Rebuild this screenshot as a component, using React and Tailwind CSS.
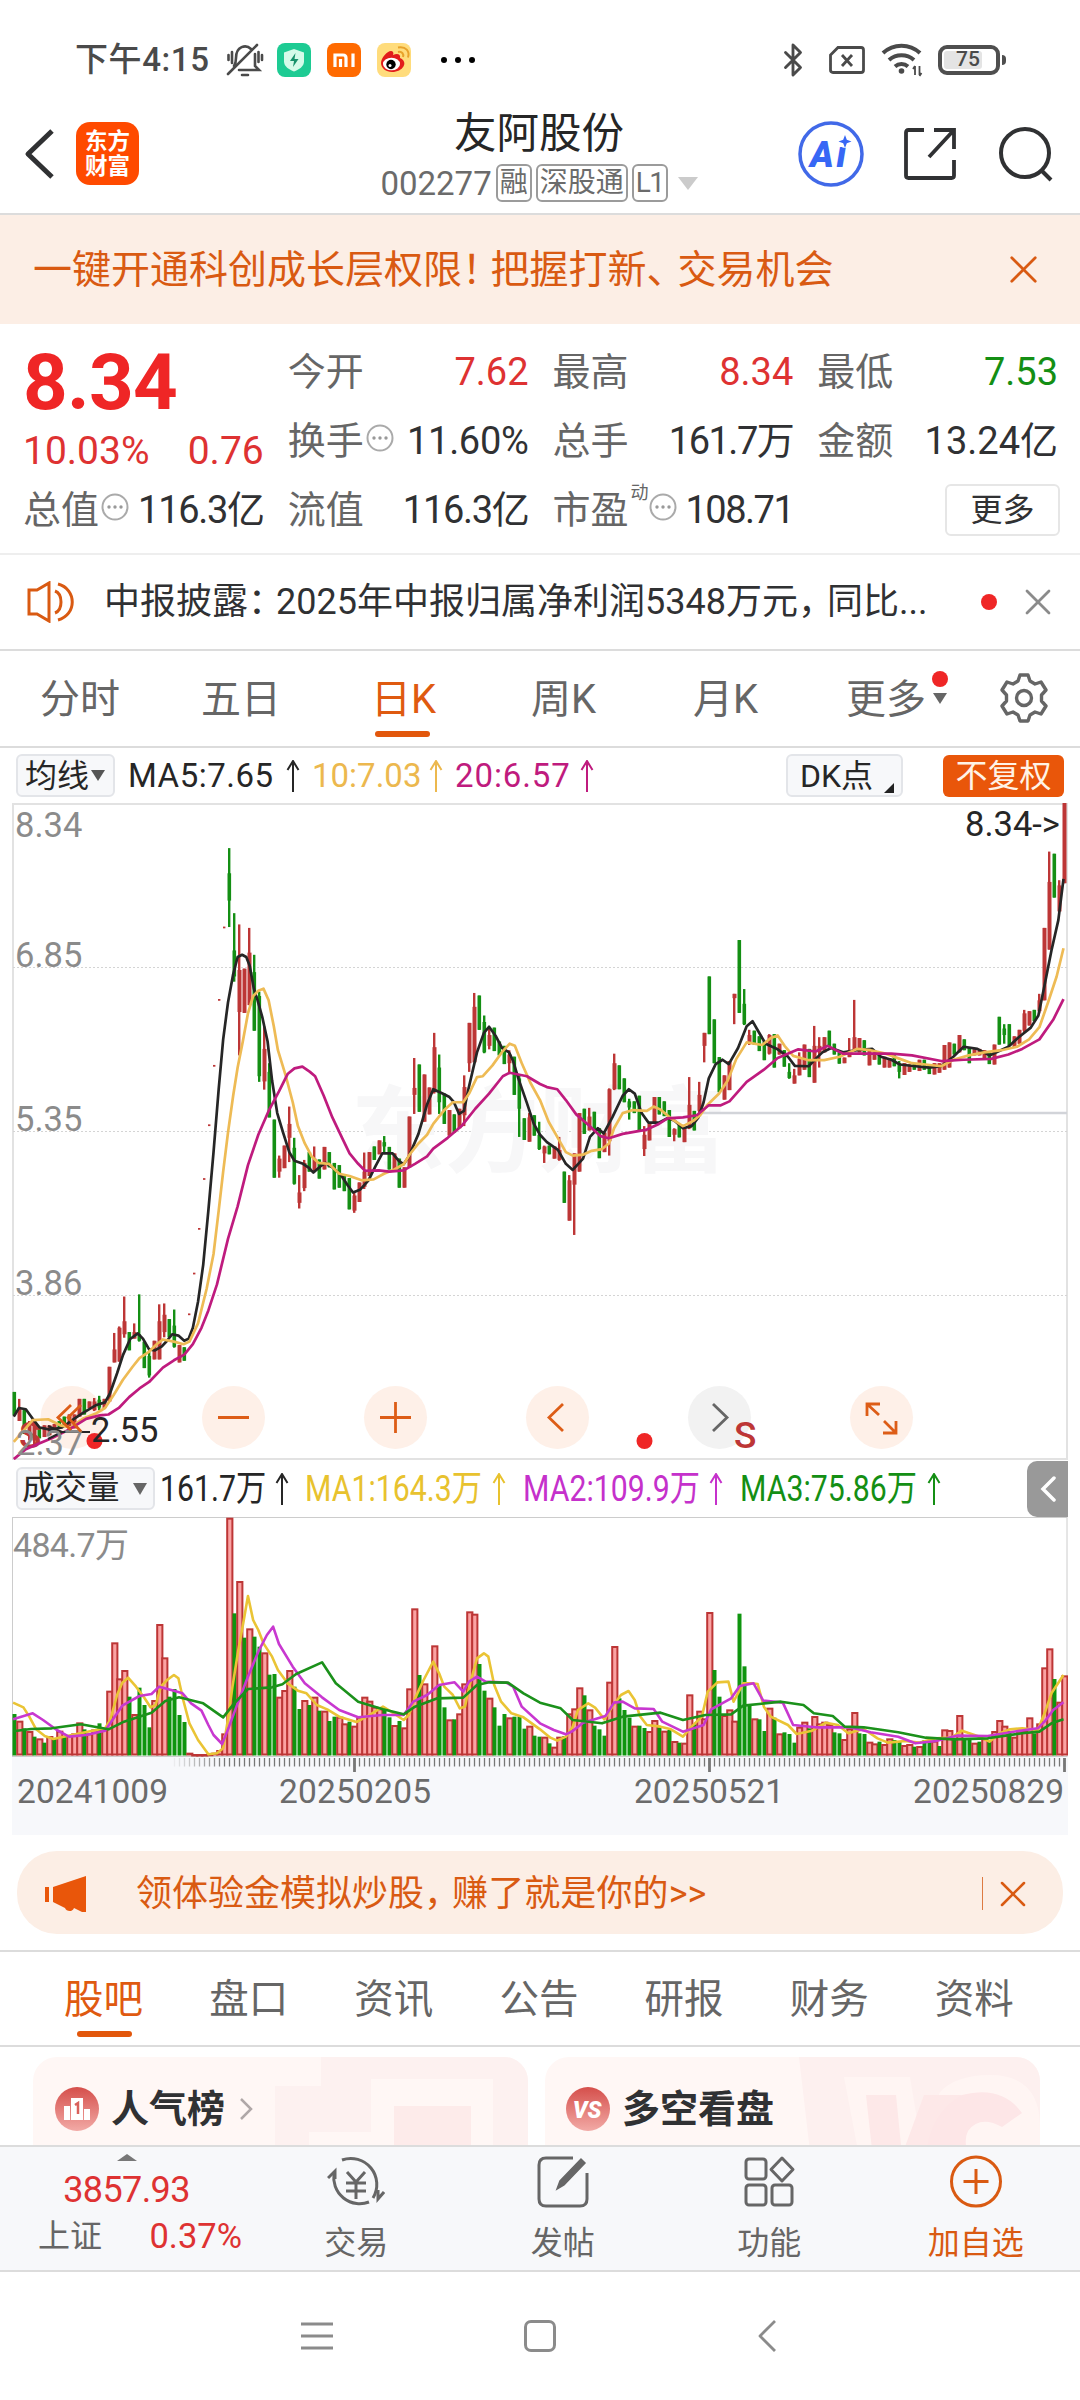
import { Bluetooth, X } from "lucide-react";

// one entry per trading day: colour, high, low and optionally body top / bottom
const CANDLES = `
g,1388,1442 r,1404,1455,1425,1455 g,1428,1485,1430,1470 r,1455,1500,1465,1490 r,1455,1510,1460,1500 g,1470,1495 r,1465,1492 r,1465,1488 r,1462,1482 g,1455,1472
g,1445,1468 r,1440,1480 r,1440,1472 r,1404,1445 g,1404,1440 r,1410,1425 r,1402,1432,1410,1430 g,1397,1430,1406,1424 r,1404,1425 r,1330,1410
r,1252,1320,1290,1320 r,1237,1318,1240,1318 r,1168,1263,1225,1255 g,1250,1292 r,1230,1265,1250,1265 g,1163,1272,1255,1270 g,1272,1333 g,1290,1355,1305,1350 r,1270,1313 r,1186,1313,1225,1313
r,1184,1262,1210,1250 g,1220,1262 g,1198,1286,1235,1284 r,1280,1320 g,1285,1316 r,1207,1211 r,1113,1117 r,1010,1014 r,895,899 r,771,775
r,634,638 r,482,486 r,315,319 g,134,316,192,255 g,284,442,370,430 r,310,612,415,512 r,412,514 r,318,496,375,496 g,380,555,420,555 g,465,673,475,660
r,545,691,597,672 g,630,755,650,755 g,760,894 r,843,894,850,880 r,820,872 r,730,858,770,802 g,802,910,825,908 r,888,965,928,952 r,853,925,860,918 g,835,880
r,822,880,850,875 g,852,896 r,823,875 g,835,870 g,860,921 g,865,917 g,890,925 g,895,967 r,925,975,935,970 r,905,950
r,836,920,880,915 r,835,890 g,822,853 r,808,840 g,798,835,812,822 g,823,875 r,838,875 g,850,917 r,870,917 r,753,870
r,618,747,687,703 g,633,742 r,656,765 r,686,748 r,560,700,593,697 g,610,747,640,720 g,700,770 r,738,797 g,748,790 r,735,780
r,658,775,685,750 r,537,650,537,630 r,468,628,500,628 g,474,553 g,520,607,535,605 r,548,598,565,590 g,548,602 g,580,612 g,590,632 r,600,655,610,630
g,615,703 g,655,800,665,735 g,757,807 r,745,811,755,811 g,750,797 g,765,830,795,828 r,820,860,822,838 g,820,840 r,822,850 r,800,855,830,853
g,880,952 r,888,993,900,993 r,838,1026,838,910 r,745,880 g,735,793 r,733,785,753,785 g,742,785 g,780,849 r,790,835 r,688,843,690,810
r,608,692,630,690 g,635,690 g,665,720 g,712,760,718,732 g,718,745 g,705,785 r,775,844,795,828 r,770,808 r,708,770 g,708,748
g,718,752 g,738,800 r,780,810,782,795 g,770,801 r,780,812 r,662,782,726,780 g,740,785 r,673,750,703,740 r,560,628,560,590 g,430,563
g,529,630 g,616,697 r,658,714 r,625,692 r,470,540,470,480 g,346,514 g,459,542,493,540 r,553,588,565,585 g,555,587 g,568,602
g,580,623 r,563,610,565,608 g,563,640 r,585,610 g,600,638 g,630,666,650,664 r,643,677,658,677 r,605,658,620,658 r,587,645 g,597,662
r,544,675,590,675 r,570,640,590,605 r,570,605 g,555,592 g,585,610 g,605,631 r,617,630 r,572,616,600,616 r,484,600,570,600 r,572,605
g,577,612 r,600,635 r,605,622 g,605,633 r,615,640 r,618,640 g,612,637 g,625,665,630,650 r,630,657 r,633,650
g,630,645 r,622,648 g,622,645 g,632,655 r,630,656 r,630,652 r,588,645 r,582,640 g,585,610 r,565,605
g,575,600 g,595,630 r,598,612 r,597,612 r,600,620 g,605,632 r,587,633 g,523,587 g,540,585,550,565 g,540,590
r,568,595 r,553,585 r,507,560,515,555 r,510,543 g,507,533 r,470,515,485,510 r,318,485 r,142,368,212,368 g,147,248 r,208,280,220,280
r,30,215`.trim().split(/\s+/).map((s) => s.split(","));

const VOLUMES = `
g822 r842 g865 r873 g890 r895 g908 r888 g895 r872 g890 r885 r880 r847 g868 r880 r868 g850 r865 r752
r607 r715 r690 g770 r822 g743 g795 g862 r780 r552 r652 g770 g747 g825 g846 r938 r942 r942 r942 r941
r938 r930 r880 r233 g520 r423 g593 r565 g590 g620 r637 g704 g702 r770 r750 r690 g740 g807 r780 g795
r770 g812 r812 g843 g830 r830 r850 g845 r857 r830 r770 r782 r800 r805 g805 g832 r855 g843 r862 r745
r505 g705 r730 r780 r616 g735 g802 r838 g838 r820 r730 r514 r521 g672 g752 r773 g802 g857 g822 r832
g830 g830 g866 r857 g887 g890 r890 g910 r920 r890 g888 r820 r805 r742 g766 r808 g857 g868 g887 r725
r618 g775 g810 g833 r857 g857 g864 r873 r840 g862 r872 g870 r903 g908 r908 r763 g853 r812 r835 r516
g690 g770 r825 r808 r842 g521 g679 g795 r835 g838 g873 r803 g833 r880 g877 g882 g908 r860 r845 g865
r828 r850 r845 r852 g877 g880 r897 r865 r816 g880 g882 r905 r910 g905 r912 r895 g900 g905 r915 r912
g920 r918 g900 g903 r902 g918 r868 r870 g893 r825 g895 g898 r908 g905 r895 g905 r873 r840 r857 g873
r890 r872 r870 r832 g880 r850 r682 r625 g717 r785 r706`.trim().split(/\s+/);

const MA5 =
  "40,1445 55,1425 75,1428 95,1450 115,1470 145,1475 180,1470 215,1450 240,1437 280,1418 305,1412 320,1390 340,1345 357,1303 378,1266 400,1253 415,1265 433,1290 450,1292 470,1283 485,1270 500,1255 518,1258 535,1270 548,1265 560,1240 575,1180 590,1095 605,970 620,835 635,690 648,575 662,490 677,425 690,385 703,380 715,385 725,405 737,458 748,485 762,525 777,580 790,670 805,745 822,790 840,835 855,855 880,862 895,870 910,882 930,868 945,860 965,870 990,888 1010,912 1025,928 1045,922 1070,900 1090,868 1110,838 1140,838 1158,855 1172,863 1187,845 1215,793 1240,725 1258,690 1285,700 1305,708 1318,720 1333,747 1347,740 1360,690 1385,605 1405,560 1420,546 1440,568 1458,595 1478,605 1490,625 1505,665 1530,722 1550,770 1568,795 1588,812 1620,830 1643,862 1663,876 1693,850 1713,800 1736,780 1753,792 1778,755 1808,705 1826,690 1843,700 1863,745 1883,767 1913,767 1938,757 1958,762 1983,780 2008,775 2028,755 2043,720 2058,665 2078,632 2098,622 2116,632 2143,595 2168,545 2185,533 2203,558 2223,585 2258,598 2288,615 2308,636 2348,637 2368,620 2388,605 2413,595 2448,605 2488,600 2533,597 2558,615 2588,622 2613,633 2658,637 2698,640 2733,637 2768,615 2798,592 2838,597 2873,612 2898,603 2928,592 2958,570 2993,548 3015,520 3033,450 3053,370 3073,300 3088,205";
const MA10 =
  "40,1503 95,1453 140,1451 175,1465 205,1470 240,1450 280,1437 305,1425 330,1395 357,1360 385,1330 405,1310 430,1297 455,1278 473,1267 505,1272 533,1278 550,1272 575,1230 600,1150 620,1070 635,970 648,880 662,790 677,705 690,640 705,580 720,515 735,475 750,463 765,458 780,485 795,545 807,600 830,660 850,720 865,775 885,815 905,845 925,860 955,862 985,885 1015,890 1050,900 1085,898 1115,885 1145,875 1172,863 1190,840 1215,815 1240,795 1258,770 1290,738 1315,720 1345,720 1362,700 1385,662 1402,660 1430,635 1460,602 1480,585 1495,590 1515,630 1540,675 1568,715 1593,765 1618,800 1643,835 1663,843 1693,841 1718,832 1748,828 1768,815 1783,780 1808,745 1838,738 1878,740 1898,730 1918,737 1948,757 1983,775 2013,763 2033,750 2053,727 2088,700 2113,670 2138,620 2168,582 2213,588 2238,572 2258,566 2278,590 2303,613 2348,623 2393,623 2438,615 2488,597 2528,600 2568,607 2613,620 2648,630 2688,633 2733,637 2768,622 2813,612 2858,605 2908,600 2953,592 2988,575 3018,547 3043,490 3068,430 3088,365";
const MA20 =
  "40,1543 75,1520 110,1508 150,1495 200,1475 250,1450 290,1442 315,1440 345,1425 375,1400 405,1380 433,1365 473,1332 505,1315 535,1302 560,1278 585,1240 605,1200 630,1140 662,1035 690,960 720,865 750,795 780,740 810,695 835,655 855,642 878,638 900,650 915,660 940,705 965,755 995,805 1015,838 1040,862 1060,878 1100,877 1130,880 1172,877 1205,862 1240,845 1258,827 1300,802 1340,775 1380,735 1420,700 1460,660 1480,652 1530,660 1568,678 1588,685 1618,690 1643,715 1673,748 1708,772 1743,798 1768,803 1808,793 1878,783 1913,770 1938,757 1983,755 2023,750 2058,727 2093,727 2118,718 2168,673 2218,645 2258,618 2318,598 2368,603 2403,590 2448,608 2508,608 2588,608 2648,612 2733,625 2798,622 2878,620 2928,610 2968,597 3018,575 3058,530 3088,482";
const VOL_MA1 =
  "38,788 68,802 85,830 105,868 130,888 155,897 195,888 240,878 305,865 320,840 340,765 355,728 372,713 395,740 420,775 437,802 452,795 467,740 485,720 505,705 518,715 532,780 550,850 575,900 605,943 630,940 648,925 660,850 675,740 692,630 707,545 720,468 735,540 750,570 765,610 790,650 807,690 835,730 865,752 890,760 920,795 950,808 985,830 1035,846 1070,827 1112,800 1140,818 1172,840 1187,825 1205,775 1230,720 1258,665 1275,700 1290,740 1315,765 1335,805 1350,800 1365,730 1385,655 1405,640 1418,650 1435,735 1455,785 1485,820 1520,832 1568,868 1598,893 1618,902 1643,890 1663,860 1678,810 1708,790 1728,803 1755,838 1778,800 1803,765 1825,753 1843,780 1858,828 1878,855 1918,860 1948,868 1983,890 2008,860 2038,830 2055,755 2083,727 2115,725 2130,785 2158,730 2183,730 2200,732 2218,800 2238,830 2288,855 2313,882 2358,872 2398,848 2433,855 2463,880 2508,867 2548,895 2578,908 2628,903 2668,908 2718,895 2763,893 2793,872 2838,888 2873,905 2903,880 2933,868 2968,865 3013,870 3033,820 3053,760 3088,705";
const VOL_MA2 =
  "38,838 95,820 125,840 165,870 200,890 250,885 305,872 330,835 355,797 405,768 440,762 462,740 505,752 530,760 555,790 585,812 605,855 620,885 645,912 665,860 690,790 720,710 750,635 775,585 793,560 810,612 850,680 885,730 935,772 985,810 1040,832 1110,825 1172,825 1200,785 1240,765 1275,735 1320,727 1345,755 1362,725 1385,710 1410,725 1470,728 1490,740 1515,800 1568,850 1608,870 1643,883 1663,873 1693,848 1758,828 1783,788 1808,785 1843,805 1898,807 1923,845 1983,875 2043,855 2065,808 2123,775 2148,738 2188,730 2216,782 2273,788 2303,855 2368,862 2468,862 2528,877 2608,890 2658,910 2718,903 2778,887 2868,888 2943,875 3013,865 3033,845 3058,810 3088,787";
const VOL_MA3 =
  "38,874 90,867 150,865 235,853 315,868 360,845 440,818 480,783 520,772 590,790 648,832 680,790 720,747 790,742 820,733 860,702 935,667 975,730 1040,785 1112,808 1172,823 1205,800 1270,775 1345,773 1385,735 1420,727 1475,728 1520,760 1568,788 1628,805 1663,840 1748,850 1808,830 1918,818 1983,840 2048,825 2123,823 2158,797 2268,785 2333,795 2363,820 2418,828 2453,860 2508,862 2608,877 2688,893 2768,898 2868,895 2968,880 3018,875 3053,850 3088,838";

const RED = "#bd3636";
const GREEN = "#148f14";

const dayX = (i) => 14.5 + i * 5;
const priceY = (v) => v * 0.43367 - 13;
const volY = (v) => (v - 231) / 3;

function App() {
  return (
    <div className="flex h-[2400px] w-[1080px] flex-col overflow-hidden bg-white font-[Roboto,'Noto_Sans_CJK_SC',sans-serif] leading-none whitespace-nowrap text-[#303133]">
      <StatusBar />
      <Header />
      <Banner />
      <Quote />
      <Notice />
      <PeriodTabs />
      <MaLegend />
      <PriceChart />
      <VolumeLegend />
      <VolumeChart />
      <Promo />
      <InfoTabs />
      <Cards />
      <BottomBar />
      <SystemNav />
    </div>
  );
}

function StatusBar() {
  return (
    <div className="flex h-[100px] shrink-0 items-center pt-[19px] pr-[74px] pl-[75px] text-[#4a4a4a]">
      <span className="w-[151px] text-[33px] font-medium tracking-[0.6px]">下午4:15</span>
      <svg className="h-[36px] w-[38px]" viewBox="0 0 38 36" fill="none" stroke="currentColor" strokeWidth="2.600" strokeLinecap="round">
        <path d="M8 24c2-3 2-5 2-8 0-12 10-14 15-9M29 12v12l4 4H13M2 32 31 3M16 33h6M2.500 13v5M6 10v11M36 13v5M32.500 10v10" />
      </svg>
      <svg className="ml-[13px] h-[34px] w-[34px]" viewBox="0 0 34 34">
        <rect width="34" height="34" rx="8" fill="#1dcb93" />
        <path d="M17 6l10 3.500v9c0 5-5 8-10 10-5-2-10-5-10-10v-9z" fill="#d5fbe9" />
        <path d="M18.500 10l-5.500 8h4l-1 6 5.500-8h-4z" fill="#17916a" />
      </svg>
      <svg className="ml-4 h-[34px] w-[34px]" viewBox="0 0 34 34">
        <rect width="34" height="34" rx="8" fill="#ff6a00" />
        <path d="M8 24V12h8q3 0 3 3v9M13.500 16v8M26 10.500V24" fill="none" stroke="#fff" strokeWidth="3.200" />
      </svg>
      <svg className="ml-4 h-[34px] w-[34px]" viewBox="0 0 34 34">
        <rect width="34" height="34" rx="8" fill="#ffdc7c" />
        <path d="M4 20c0-5 6-12 10-12 2 0 3 2 2 4 4-2 8-1 7 3 9 4 3 14-8 14-6 0-11-4-11-9z" fill="#e21b1b" />
        <ellipse cx="14.500" cy="21" rx="8.500" ry="6.300" fill="#fff" />
        <circle cx="14" cy="21.500" r="4.700" fill="#000" />
        <circle cx="13" cy="22.500" r="1.500" fill="#fff" />
        <path d="M21 9c4-1 6 2 5 5M21 4.500c8-1.500 12 4 10 10" fill="none" stroke="#e8a22a" strokeWidth="2" />
      </svg>
      <div className="ml-[30px] flex gap-2">
        <i className="h-1.5 w-1.5 rounded-full bg-black" />
        <i className="h-1.5 w-1.5 rounded-full bg-black" />
        <i className="h-1.5 w-1.5 rounded-full bg-black" />
      </div>
      <Bluetooth className="ml-auto h-[38px] w-[36px]" strokeWidth={1.9} />
      <svg className="ml-[18px] h-[28px] w-[36px]" viewBox="0 0 36 28" fill="none" stroke="currentColor" strokeWidth="2.800">
        <path d="M9 1.500h23q2.500 0 2.500 2.500v20q0 2.500-2.500 2.500H4q-2.500 0-2.500-2.500V9zM13 9l10 11M23 9 13 20" />
      </svg>
      <svg className="ml-4 h-[34px] w-[44px]" viewBox="0 0 44 34" fill="none" stroke="currentColor" strokeWidth="4">
        <path d="M2 10a27 27 0 0 1 37 0M8 17a19 19 0 0 1 25 0M14 23.500a10 10 0 0 1 13 0" />
        <circle cx="20.500" cy="28" r="2.800" fill="currentColor" stroke="none" />
        <path d="M34 23v9M38.500 23v9M32 26l2-3M40.500 30l-2 3" strokeWidth="1.800" />
      </svg>
      <div className="ml-[13px] flex h-[30px] w-[62px] items-center rounded-[9px] border-4 border-[#4f4f4f] p-0.5">
        <div className="flex h-full w-[75%] items-center rounded-[3px] bg-[#e4e4e4] pl-3 text-[21px] font-medium">75</div>
      </div>
      <i className="ml-0.5 h-2.5 w-1 rounded-r bg-[#4f4f4f]" />
    </div>
  );
}

function Header() {
  return (
    <div className="flex h-[115px] shrink-0 items-center border-b-2 border-[#dcdcdc] pr-[26px] pb-[6px] pl-[23px]">
      <svg className="h-[54px] w-[32px]" viewBox="0 0 32 54" fill="none" stroke="#303133" strokeWidth="5" strokeLinejoin="round">
        <path d="M29 4 5 27l24 23" />
      </svg>
      <div className="ml-[21px] flex h-[63px] w-[63px] flex-col items-center justify-center gap-[3px] rounded-[14px] bg-[#ff4a00] text-[22.500px] font-bold text-white">
        <span>东方</span>
        <span>财富</span>
      </div>
      <div className="ml-[242px] flex w-[316px] flex-col items-center gap-[9px] pt-[6px]">
        <h1 className="pt-[2px] text-[42.500px] text-[#262626]">友阿股份</h1>
        <div className="flex items-center gap-1 text-[#6b6b6b]">
          <span className="text-[33px]">002277</span>
          <Tag>融</Tag>
          <Tag>深股通</Tag>
          <Tag><span className="tracking-[-1.500px]">L1</span></Tag>
          <i className="ml-1.5 border-x-[10px] border-t-[13px] border-x-transparent border-t-[#cbcbcb]" />
        </div>
      </div>
      <svg className="ml-auto h-[66px] w-[66px]" viewBox="0 0 66 66">
        <circle cx="33" cy="33" r="31" fill="none" stroke="#4169e8" strokeWidth="3.500" />
        <text x="12" y="46" fontSize="36" fontWeight="900" fontStyle="italic" fill="#3767f5" fontFamily="Roboto" textLength="36">Ai</text>
        <circle cx="47" cy="21" r="6" fill="#fff" />
        <path d="M47 14l1.800 4.700 4.700 1.800-4.700 1.800L47 27l-1.800-4.700-4.700-1.800 4.700-1.800z" fill="#3767f5" />
      </svg>
      <svg className="ml-[39px] h-[54px] w-[54px]" viewBox="0 0 54 54" fill="none" stroke="#303133" strokeWidth="3.800">
        <path d="M21 3H5.500Q3 3 3 5.500v43Q3 51 5.500 51h43q2.500 0 2.500-2.500V33M31 3h20v19M51 3 26 30" />
      </svg>
      <svg className="ml-[41px] h-[56px] w-[56px]" viewBox="0 0 56 56" fill="none" stroke="#303133" strokeWidth="4">
        <circle cx="27" cy="27" r="24" />
        <path d="M43 44l10 10" />
      </svg>
    </div>
  );
}

function Tag({ children }) {
  return <span className="flex h-[38px] items-center rounded-md border-2 border-[#9b9b9b] px-[2px] text-[28px]">{children}</span>;
}

function Banner() {
  return (
    <div className="flex h-[109px] shrink-0 items-center bg-[#fceee5] pt-[2px] pr-[37px] pl-[33px] text-[39px] text-[#d95a12]">
      <span>一键开通科创成长层权限</span>
      <span className="tracking-[-10.500px]">！</span>
      <span>把握打新</span>
      <span className="tracking-[-8px]">、</span>
      <span>交易机会</span>
      <X className="-mt-[2px] -mr-[4px] ml-auto h-[47px] w-[47px]" strokeWidth={1.4} />
    </div>
  );
}

function Quote() {
  return (
    <div className="flex h-[231px] shrink-0 gap-[24px] border-b-2 border-[#eeeeee] pt-[13px] pr-[22px] pl-[23px] text-[38px]">
      <div className="w-[241px]">
        <div className="flex h-[92px] items-center text-[78px] font-bold tracking-[-0.7px] text-[#ef2626]">8.34</div>
        <div className="flex h-[45px] items-center justify-between text-[39px] text-[#de3232]">
          <span>10.03%</span>
          <span>0.76</span>
        </div>
        <div className="mt-[1px] flex h-[69px] items-center justify-between">
          <span className="flex items-center gap-0.5 text-[#666]">总值<Dots /></span>
          <span className="tracking-[-1.300px]">116.3亿</span>
        </div>
      </div>
      <div className="w-[241px]">
        <Cell label="今开" value="7.62" tone="text-[#de3232]" />
        <Cell label="换手" value="11.60%" tone="tracking-[-0.3px]" dots />
        <Cell label="流值" value="116.3亿" tone="tracking-[-1.300px]" />
      </div>
      <div className="w-[241px]">
        <Cell label="最高" value="8.34" tone="text-[#de3232]" />
        <Cell label="总手" value="161.7万" tone="tracking-[-1.500px]" />
        <Cell label="市盈" value="108.71" tone="tracking-[-1.500px]" sup="动" dots />
      </div>
      <div className="w-[241px]">
        <Cell label="最低" value="7.53" tone="text-[#148f14]" />
        <Cell label="金额" value="13.24亿" />
        <div className="flex h-[69px] items-center justify-end">
          <button className="-mr-0.5 h-[52px] w-[115px] rounded-md border-2 border-[#e6e6e6] text-[32px]">更多</button>
        </div>
      </div>
    </div>
  );
}

function Cell({ label, value, tone, sup, dots }) {
  return (
    <div className="flex h-[69px] items-center justify-between">
      <span className="flex items-center gap-0.5 text-[#666]">
        {label}
        {sup && <sup className="top-[-17px] -mr-0.5 text-[18px]">{sup}</sup>}
        {dots && <Dots />}
      </span>
      <span className={tone}>{value}</span>
    </div>
  );
}

function Dots() {
  return (
    <svg className="-mt-[5px] h-[28px] w-[28px]" viewBox="0 0 28 28" fill="#999">
      <circle cx="14" cy="14" r="12.500" fill="none" stroke="#aaa" strokeWidth="2" />
      <circle cx="8" cy="14" r="1.700" />
      <circle cx="14" cy="14" r="1.700" />
      <circle cx="20" cy="14" r="1.700" />
    </svg>
  );
}

function Notice() {
  return (
    <div className="flex h-[96px] shrink-0 items-center border-b-2 border-[#dcdcdc] pr-[28px] pl-[27px] text-[36px]">
      <svg className="h-[42px] w-[48px]" viewBox="0 0 48 42" fill="none" stroke="#d95a12" strokeWidth="3">
        <path d="M2 9h8L22 2v38L10 33H2zM28 10c8 3 8 19 0 22M31 3c19 5 19 31 0 36" />
      </svg>
      <span className="ml-[29px]">中报披露</span>
      <span className="tracking-[-8px]">：</span>
      <span>2025年中报归属净利润5348万元</span>
      <span className="tracking-[-7px]">，</span>
      <span>同比...</span>
      <i className="ml-auto h-4 w-4 rounded-full bg-[#ef2626]" />
      <X className="-mr-2 ml-[19px] h-[44px] w-[44px] text-[#8b8b8b]" strokeWidth={1.5} />
    </div>
  );
}

function PeriodTabs() {
  return (
    <div className="flex h-[97px] shrink-0 items-center border-b-2 border-[#dcdcdc] pt-[2px] pr-[32px] pl-[40px] text-[40px] text-[#666]">
      <span className="w-[161px]">分时</span>
      <span className="w-[170px]">五日</span>
      <span className="relative w-[160px] text-[#df5a10]">
        日K
        <i className="absolute -bottom-[17px] left-[4px] h-[6px] w-[55px] rounded-full bg-[#e2570c]" />
      </span>
      <span className="w-[162px]">周K</span>
      <span className="w-[153px]">月K</span>
      <span>更多</span>
      <div className="-mt-[24px] ml-1.5 flex flex-col items-center gap-[6px]">
        <i className="h-4 w-4 rounded-full bg-[#ef2626]" />
        <i className="border-x-[7px] border-t-[11px] border-x-transparent border-t-[#666]" />
      </div>
      <svg className="-mt-[4px] ml-auto h-[50px] w-[48px]" viewBox="0 0 48 50" fill="none" stroke="#666" strokeWidth="3.400" strokeLinejoin="round">
        <path d="M20 2h8l2 6 5 3 6-2 5 8-4.500 5v6L46 33l-5 8-6-2-5 3-2 6h-8l-2-6-5-3-6 2-5-8 4.500-5v-6L2 17l5-8 6 2 5-3z" />
        <circle cx="24" cy="25" r="7.500" />
      </svg>
    </div>
  );
}

function Arrow({ className }) {
  return (
    <svg className={className} viewBox="0 0 14 32" fill="none" stroke="currentColor" strokeWidth="2">
      <path d="M7 32V1M1.500 10 7 1l5.500 9" />
    </svg>
  );
}

function MaLegend() {
  return (
    <div className="flex h-[55px] shrink-0 items-center pr-[16px] pl-[16px] text-[33px] text-[#262626]">
      <div className="flex h-[43px] w-[99px] items-center rounded-md border-2 border-[#e3e5e9] bg-[#f7f8fa] pl-[7px] text-[32px]">
        均线
        <i className="ml-0.5 border-x-[7px] border-t-[11px] border-x-transparent border-t-[#555]" />
      </div>
      <span className="ml-[13px] w-[158px] tracking-[0.5px]">MA5:7.65</span>
      <Arrow className="h-[32px] w-[14px]" />
      <span className="ml-[12px] w-[117px] text-[#ecb84e]">10:7.03</span>
      <Arrow className="h-[32px] w-[14px] text-[#ecb84e]" />
      <span className="ml-[12px] w-[125px] tracking-[0.9px] text-[#bf1b7e]">20:6.57</span>
      <Arrow className="h-[32px] w-[14px] text-[#bf1b7e]" />
      <div className="ml-auto flex h-[43px] w-[117px] items-center rounded-md border-2 border-[#e3e5e9] bg-[#f7f8fa] pl-[12px] text-[32px]">
        DK点
        <i className="mt-6 ml-[11px] border-b-[10px] border-l-[10px] border-b-[#222] border-l-transparent" />
      </div>
      <div className="ml-[40px] flex h-[42px] w-[121px] items-center justify-center rounded-md bg-[#e9560a] text-[32px] text-[#fff3e6]">不复权</div>
    </div>
  );
}

function PriceChart() {
  return (
    <div className="relative h-[657px] shrink-0">
      <svg className="block h-[657px] w-[1080px]" viewBox="0 0 1080 657" fontFamily="Roboto, 'Noto Sans CJK SC', sans-serif">
        <rect x="13" y="1" width="1054" height="655" fill="none" stroke="#e2e2e2" strokeWidth="2" />
        <g stroke="#d4d4d4" strokeDasharray="2 2">
          <path d="M13 164.500h1054M13 328.500h1054M13 492.500h1054" />
        </g>
        <text x="351" y="362" fontSize="94" fontWeight="700" fill="#f7f7f8">东方财富</text>
        <path d="M700 310h367" stroke="#d2d4d9" strokeWidth="2.500" />
        <g fontSize="34.500" fill="#8b8b8b">
          <text x="15" y="34">8.34</text>
          <text x="15" y="164">6.85</text>
          <text x="15" y="328">5.35</text>
          <text x="15" y="492">3.86</text>
        </g>
        <g fill="#fef0e8">
          <circle cx="72" cy="614.500" r="31.500" />
          <circle cx="233.500" cy="614.500" r="31.500" />
          <circle cx="395.500" cy="614.500" r="31.500" />
          <circle cx="557.500" cy="614.500" r="31.500" />
          <circle cx="719.500" cy="614.500" r="31.500" fill="#f2f2f2" />
          <circle cx="881.500" cy="614.500" r="31.500" />
        </g>
        {CANDLES.map(([c, hi, lo, top, bottom], i) => {
          const x = dayX(i);
          const t = priceY(top ?? hi);
          const b = priceY(bottom ?? lo);
          return (
            <g key={i} fill={c === "r" ? RED : GREEN}>
              <rect x={x - 1.5} y={priceY(hi)} width="2.400" height={(lo - hi) * 0.43367} />
              {lo - hi > 5 && <rect x={x - 2} y={t} width={c === "r" ? 4 : 3.6} height={b - t} />}
            </g>
          );
        })}
        <text x="19" y="645" fontSize="37" fontWeight="500" fill={RED}>S</text>
        <text x="734" y="645" fontSize="37" fontWeight="500" fill={RED}>S</text>
        <g transform="translate(0 -13) scale(0.3444 0.43367)" fill="none" strokeWidth="2.700" strokeLinejoin="round">
          <polyline points={MA5} stroke="#262626" vectorEffect="non-scaling-stroke" />
          <polyline points={MA10} stroke="#eebb55" vectorEffect="non-scaling-stroke" />
          <polyline points={MA20} stroke="#bf1b7e" vectorEffect="non-scaling-stroke" />
        </g>
        <circle cx="94.500" cy="638" r="8" fill="#ef2626" />
        <circle cx="644.500" cy="638" r="8" fill="#ef2626" />
        <path d="M62 629h28M62 629l-14-6M62 629l-14 7" stroke="#262626" strokeWidth="2" fill="none" />
        <text x="16" y="652" fontSize="34.500" fill="#8b8b8b">2.37</text>
        <text x="91" y="639" fontSize="34.500" fill="#262626">2.55</text>
        <text x="965" y="33" fontSize="34.500" fill="#262626">8.34-&gt;</text>
        <g fill="none" stroke="#dd5d17" strokeWidth="2.800">
          <path d="M71 602 58 614.500l13 12.500M81 602 68 614.500l13 14" />
          <path d="M218 614.500h31M380 614.500h31M395.500 599v31" />
          <path d="M563 601l-14 13.500 14 13.500" />
          <path d="M713 601l14 13.500-14 13.500" stroke="#666" />
          <path d="M867 613v-12h13M867 601l12 11M896 618v12h-13M896 630l-12-12" />
        </g>
      </svg>
    </div>
  );
}

function VolumeLegend() {
  return (
    <div className="flex h-[57px] shrink-0 items-center pr-[12px] pl-[16px] text-[36px] text-[#262626]">
      <div className="flex h-[43px] w-[139px] items-center rounded-md border-2 border-[#e3e5e9] bg-[#f7f8fa] pl-[4px] text-[32.500px]">
        成交量
        <i className="ml-[13px] border-x-[7px] border-t-[12px] border-x-transparent border-t-[#666]" />
      </div>
      <span className="ml-[5px] w-[115px]"><span className="inline-block origin-left scale-x-[0.84]">161.7万</span></span>
      <Arrow className="h-[32px] w-[14px]" />
      <span className="ml-[16px] w-[187px] text-[#e8c22e]"><span className="inline-block origin-left scale-x-[0.84]">MA1:164.3万</span></span>
      <Arrow className="h-[32px] w-[14px] text-[#e8c22e]" />
      <span className="ml-[17px] w-[186px] text-[#c531cb]"><span className="inline-block origin-left scale-x-[0.84]">MA2:109.9万</span></span>
      <Arrow className="h-[32px] w-[14px] text-[#c531cb]" />
      <span className="ml-[17px] w-[187px] text-[#148f14]"><span className="inline-block origin-left scale-x-[0.84]">MA3:75.86万</span></span>
      <Arrow className="h-[32px] w-[14px] text-[#148f14]" />
      <div className="ml-auto flex h-[56px] w-[41px] items-center justify-center rounded-l-[10px] bg-[#999]">
        <svg className="h-[28px] w-[16px]" viewBox="0 0 16 28" fill="none" stroke="#fff" strokeWidth="3.500" strokeLinecap="round">
          <path d="M14 3 3 14l11 11" />
        </svg>
      </div>
    </div>
  );
}

function VolumeChart() {
  return (
    <div className="h-[318px] shrink-0 px-[12px]">
      <svg className="block h-[240px] w-[1056px]" viewBox="12 0 1056 240">
        <rect x="12.500" y="0.500" width="1054.500" height="239" fill="none" stroke="#cccccc" />
        <text x="13" y="40" fontSize="34" fill="#8b8b8b" fontFamily="Roboto, 'Noto Sans CJK SC', sans-serif" textLength="116">484.7万</text>
        {VOLUMES.map((v, i) => {
          const top = volY(Number(v.slice(1)));
          return v[0] === "r" ? (
            <rect key={i} x={dayX(i) - 2.3} y={top + 1} width="5.200" height={Math.max(0.5, 236.5 - top)} fill="#fba3a3" stroke={RED} strokeWidth="2" />
          ) : (
            <rect key={i} x={dayX(i) - 2} y={top} width="4" height={238.5 - top} fill="#0f950f" />
          );
        })}
        <g transform="translate(0 -77) scale(0.3444 0.33333)" fill="none" strokeWidth="2.600" strokeLinejoin="round">
          <polyline points={VOL_MA1} stroke="#eac435" vectorEffect="non-scaling-stroke" />
          <polyline points={VOL_MA2} stroke="#c838d0" vectorEffect="non-scaling-stroke" />
          <polyline points={VOL_MA3} stroke="#1b911b" vectorEffect="non-scaling-stroke" />
        </g>
      </svg>
      <div className="h-[78px] bg-[#f7f8fb]">
        <svg className="block h-[78px] w-[1056px]" viewBox="12 0 1056 78" fontFamily="Roboto">
          {VOLUMES.map((_, i) => i > 31 && (
            <path key={i} d={`M${dayX(i)} 1v8.500`} stroke="#777" strokeWidth="1.300" opacity={Math.min(1, (i - 31) / 11)} />
          ))}
          <path d="M354.500 1v14M709.500 1v14M1064.500 1v14" stroke="#777" strokeWidth="2.800" />
          <g fontSize="33.500" fill="#6b6b6b">
            <text x="17" y="45.500" textLength="151">20241009</text>
            <text x="279" y="45.500" textLength="152">20250205</text>
            <text x="634" y="45.500" textLength="150">20250521</text>
            <text x="913" y="45.500" textLength="151">20250829</text>
          </g>
        </svg>
      </div>
    </div>
  );
}

function Promo() {
  return (
    <div className="h-[115px] shrink-0 pt-[16px] pr-[17px] pl-[17px]">
      <div className="flex h-[83px] items-center rounded-[40px] bg-[#fceee5] pt-[2px] pr-[28px] pl-[27px] text-[36px] text-[#d95a12]">
        <svg className="h-[38px] w-[44px]" viewBox="0 0 44 38" fill="#e9560a">
          <path d="M1 12h4v15H1zM9 12l33-11v36h-4l-8-4c-2 5-8 3-9 0L9 27z" />
        </svg>
        <span className="ml-[48px]">领体验金模拟炒股</span>
        <span className="tracking-[-8px]">，</span>
        <span className="tracking-[0.1px]">赚了就是你的&gt;&gt;</span>
        <i className="ml-auto h-[33px] w-[1.500px] bg-[#dd7a42]" />
        <X className="ml-[8px] h-[44px] w-[44px]" strokeWidth={1.4} />
      </div>
    </div>
  );
}

function InfoTabs() {
  return (
    <div className="flex h-[97px] shrink-0 items-center border-y-2 border-[#dcdcdc] pt-[3px] pl-[64px] text-[39.500px] text-[#666]">
      <span className="relative w-[145.500px] text-[#df5a10]">
        股吧
        <i className="absolute -bottom-[17px] left-[13px] h-[6px] w-[55px] rounded-full bg-[#e2570c]" />
      </span>
      {["盘口", "资讯", "公告", "研报", "财务", "资料"].map((t) => (
        <span key={t} className="w-[145.500px]">{t}</span>
      ))}
    </div>
  );
}

function Cards() {
  return (
    <div className="flex h-[98px] shrink-0 gap-[17px] overflow-hidden pt-[10px] pl-[33px] text-[38px] font-bold">
      <div className="relative h-[120px] w-[495px] overflow-hidden rounded-3xl bg-[#fff7f5]">
        <svg className="absolute inset-0" width="495" height="120" viewBox="0 0 495 120">
          <path d="M288 0h207v120H242V29h46z" fill="#fdf1f0" />
          <path d="M276 75h62V22h122v98H276z" fill="#fff7f5" />
          <path d="M361 49h77v71h-77z" fill="#fdebea" />
        </svg>
        <div className="relative flex h-[104px] items-center pl-[22px]">
          <svg className="h-[44px] w-[44px]" viewBox="0 0 44 44">
            <defs>
              <linearGradient id="badge" x2="0" y2="1">
                <stop stopColor="#d54f4b" />
                <stop offset="1" stopColor="#f2aaa6" />
              </linearGradient>
            </defs>
            <circle cx="22" cy="22" r="22" fill="url(#badge)" />
            <path d="M9 19h6v14H9zM16 11h12v22H16zM29 22h6v11h-6z" fill="#fff" />
            <path d="M20 18l3-2v11" stroke="#d9605b" strokeWidth="2.500" fill="none" />
          </svg>
          <span className="ml-[12px]">人气榜</span>
          <svg className="ml-[14px] h-[22px] w-[14px]" viewBox="0 0 14 22" fill="none" stroke="#b0a8a8" strokeWidth="2.500">
            <path d="M2 1l10 10L2 21" />
          </svg>
        </div>
      </div>
      <div className="relative h-[120px] w-[495px] overflow-hidden rounded-3xl bg-[#fff7f5]">
        <svg className="absolute inset-0" width="495" height="120" viewBox="0 0 495 120">
          <path d="M254 0h241v120H268z" fill="#fdf0ef" />
          <path d="M299 20h66l10 60 20-45q16-17 50-17 50 0 50 52v50H318z" fill="#fff5f3" />
          <path d="M321 38h30l6 60 22-60h38q-18 16-12 44l-26 38H330z" fill="#fde8e8" />
          <path d="M417 38q40-10 60 18l-20 14q-22-12-34 4-8 16 12 46h-54q-4-60 36-82z" fill="#fde6e7" />
        </svg>
        <div className="relative flex h-[104px] items-center pl-[21px]">
          <svg className="h-[44px] w-[44px]" viewBox="0 0 44 44">
            <circle cx="22" cy="22" r="22" fill="url(#badge)" />
            <text x="21" y="30.500" textAnchor="middle" fontSize="23" fontWeight="900" fontStyle="italic" fontFamily="Roboto" fill="#fff">VS</text>
          </svg>
          <span className="ml-[12px]">多空看盘</span>
        </div>
      </div>
    </div>
  );
}

function BottomBar() {
  return (
    <div className="flex h-[127px] shrink-0 border-y-2 border-[#dcdcdc] bg-[#f7f8fa] text-[32px] text-[#666]">
      <div className="flex w-[253px] flex-col items-center pt-[7px]">
        <i className="border-x-[10px] border-b-[7px] border-x-transparent border-b-[#777]" />
        <span className="mt-[11px] text-[36px] tracking-[-0.6px] text-[#de3232]">3857.93</span>
        <div className="mt-[11px] ml-[38px] flex w-[204px] items-center justify-between self-start">
          <span>上证</span>
          <span className="text-[34.500px] text-[#de3232]">0.37%</span>
        </div>
      </div>
      <BarItem label="交易">
        <path d="M15 6A26 26 0 0 1 46 44M42 48A26 26 0 0 1 7 20" />
        <path d="M1 24l7-7v8M57 38l-6 7v-9M20 18l9 10 9-10M29 28v17M19 29h20M19 37h20" />
      </BarItem>
      <BarItem label="发帖">
        <path d="M39 4H12q-7 0-7 7v34q0 7 7 7h34q7 0 7-7V19" />
        <path d="M23 35l3-8L47 5l4 4-21 22z" fill="currentColor" strokeWidth="1.500" />
      </BarItem>
      <BarItem label="功能">
        <rect x="6" y="5" width="20" height="20" rx="3" />
        <rect x="6" y="31" width="20" height="20" rx="3" />
        <rect x="32" y="31" width="20" height="20" rx="3" />
        <path d="M42 4l11 11.500L42 27 31 15.500z" strokeLinejoin="round" />
      </BarItem>
      <BarItem label="加自选" tone="text-[#d95a12]">
        <circle cx="29" cy="27.500" r="24.500" />
        <path d="M29 15v25M16.500 27.500h25" />
      </BarItem>
    </div>
  );
}

function BarItem({ label, tone, children }) {
  return (
    <div className={`flex w-[206.500px] flex-col items-center pt-[7px] ${tone || ""}`}>
      <svg className="h-[56px] w-[58px]" viewBox="0 0 58 56" fill="none" stroke="currentColor" strokeWidth="3">
        {children}
      </svg>
      <span className="mt-[17px]">{label}</span>
    </div>
  );
}

function SystemNav() {
  return (
    <div className="flex flex-1 items-center justify-between pr-[303px] pl-[301px]">
      <svg className="h-[32px] w-[32px]" viewBox="0 0 32 32" stroke="#8b8b8b" strokeWidth="3">
        <path d="M0 4h32M0 16h32M0 28h32" />
      </svg>
      <div className="-ml-[11px] h-[32px] w-[32px] rounded-[7px] border-3 border-[#8b8b8b]" />
      <svg className="h-[34px] w-[20px]" viewBox="0 0 20 34" fill="none" stroke="#8b8b8b" strokeWidth="2.800" strokeLinejoin="round">
        <path d="M18 2 3 17l15 15" />
      </svg>
    </div>
  );
}

export default App;
